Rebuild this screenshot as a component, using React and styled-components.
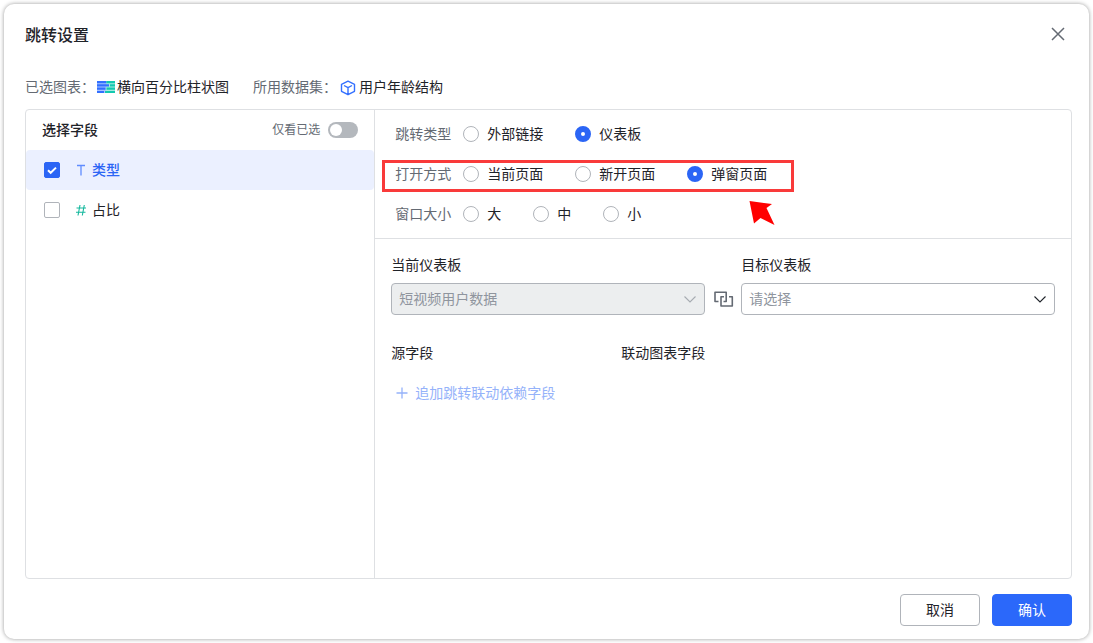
import React, { useState } from 'react';
import styled, { createGlobalStyle } from 'styled-components';

const GlobalStyle = createGlobalStyle`
    * {
        box-sizing: border-box;
    }
    body {
        margin: 0;
        background: #fff;
        color: #1f2329;
        font-family: "Liberation Sans", "Noto Sans CJK SC", sans-serif;
        font-size: 14px;
        line-height: 22px;
    }
    button, select, input {
        font: inherit;
        margin: 0;
    }
`;

const Page = styled.div`
    display: flex;
    min-height: 100vh;
    padding: 4px;
`;

const Dialog = styled.section`
    flex: 1;
    display: flex;
    flex-direction: column;
    padding: 19px 17px 13px 21px;
    border-radius: 10px;
    background: #fff;
    box-shadow: 0 0 4px rgba(0, 0, 0, 0.4);
`;

const Header = styled.header`
    display: flex;
    align-items: flex-start;
    justify-content: space-between;
    height: 26px;
    padding-right: 4px;
    h1 {
        margin: 0;
        font-size: 16px;
        font-weight: 500;
        line-height: 26px;
    }
`;

const CloseButton = styled.button`
    display: flex;
    padding: 2px 0;
    border: 0;
    background: none;
    color: #646a73;
    cursor: pointer;
`;

const Summary = styled.div`
    display: flex;
    gap: 24px;
    margin: 27px 0 11px;
`;

const SummaryItem = styled.div`
    display: flex;
    align-items: center;
    span {
        color: #646a73;
        white-space: nowrap;
    }
    svg {
        flex: none;
        margin: 0 2px;
    }
`;

const Panel = styled.div`
    flex: 1;
    display: grid;
    grid-template-columns: 1fr 2fr;
    border: 1px solid #dee0e3;
    border-radius: 4px;
`;

const SettingPane = styled.div`
    border-left: 1px solid #dee0e3;
`;

const FieldHeader = styled.div`
    display: flex;
    align-items: center;
    justify-content: space-between;
    height: 40px;
    padding: 0 16px;
    h2 {
        margin: 0;
        font-size: 14px;
        font-weight: 500;
    }
`;

const SwitchLabel = styled.label`
    display: flex;
    align-items: center;
    gap: 8px;
    color: #646a73;
    font-size: 12px;
`;

const Switch = styled.input`
    appearance: none;
    display: flex;
    align-items: center;
    width: 30px;
    height: 16px;
    padding: 0 2px;
    border-radius: 8px;
    background: #b4b8bd;
    &::before {
        content: "";
        width: 12px;
        height: 12px;
        border-radius: 50%;
        background: #fff;
    }
    &:checked {
        justify-content: flex-end;
        background: #3370ff;
    }
`;

const FieldRow = styled.label`
    display: flex;
    align-items: center;
    height: 40px;
    padding: 0 18px;
    border-radius: 4px;
    background: ${props => props.$active ? '#ebf0ff' : 'transparent'};
    color: ${props => props.$active ? '#2b65f5' : '#1f2329'};
    font-weight: ${props => props.$active ? 500 : 400};
    svg {
        margin: 0 4px 0 14px;
    }
`;

const CheckBox = styled.input`
    appearance: none;
    width: 16px;
    height: 16px;
    border: 1px solid #b0b4ba;
    border-radius: 2px;
    background: #fff;
    &:checked {
        border-color: #2b65f5;
        background: #2b65f5 url("data:image/svg+xml,%3Csvg xmlns='http://www.w3.org/2000/svg' viewBox='0 0 14 14'%3E%3Cpath d='M3 7.2l2.7 2.6L11 4.6' fill='none' stroke='white' stroke-width='2'/%3E%3C/svg%3E") center / 14px no-repeat;
    }
`;

const Options = styled.div`
    display: flex;
    flex-direction: column;
    align-items: flex-start;
    gap: 18px;
    padding: 13px 20px;
    height: 129px;
    border-bottom: 1px solid #dee0e3;
`;

const OptionRow = styled.fieldset`
    position: relative;
    display: flex;
    gap: 32px;
    min-width: 0;
    margin: 0;
    padding: 0;
    border: 0;
    legend {
        float: left;
        width: 56px;
        margin-right: -20px;
        padding: 0;
        color: #646a73;
    }
`;

// 强调框
const Highlight = styled.span`
    position: absolute;
    inset: -3px -27px -7px -13px;
    border: 3px solid #f93a3a;
    pointer-events: none;
`;

const Pointer = styled.svg`
    position: absolute;
    top: 37px;
    right: -9px;
    pointer-events: none;
`;

const RadioLabel = styled.label`
    display: flex;
    align-items: center;
    gap: 8px;
    white-space: nowrap;
`;

const Radio = styled.input`
    appearance: none;
    width: 16px;
    height: 16px;
    border: 1px solid #b0b4ba;
    border-radius: 50%;
    background: #fff;
    &:checked {
        border: 6px solid #2b65f5;
    }
`;

const Target = styled.div`
    padding: 15px 16px;
`;

const BoardRow = styled.div`
    display: flex;
    align-items: flex-end;
`;

const LinkIcon = styled.svg`
    flex: none;
    width: 36px;
    height: 32px;
`;

const BoardField = styled.label`
    flex: 1;
    display: flex;
    flex-direction: column;
    gap: 7px;
`;

const SelectWrap = styled.span`
    display: grid;
    align-items: center;
    & > * {
        grid-area: 1 / 1;
    }
    svg {
        justify-self: end;
        margin-right: 8px;
        color: ${props => props.$disabled ? '#a6abb1' : '#1f2329'};
        pointer-events: none;
    }
`;

const Select = styled.select`
    appearance: none;
    width: 100%;
    height: 32px;
    padding: 0 30px 0 7px;
    border: 1px solid #b0b4ba;
    border-radius: 4px;
    background: #fff;
    color: #8f959e;
    opacity: 1;
    &:disabled {
        background: #eceeef;
    }
`;

const FieldTitles = styled.div`
    display: grid;
    grid-template-columns: 230px 1fr;
    margin-top: 27px;
`;

const AddButton = styled.button`
    display: flex;
    align-items: center;
    gap: 6px;
    margin-top: 18px;
    padding: 0 4px;
    border: 0;
    background: none;
    color: #95b2fa;
`;

const Footer = styled.footer`
    display: flex;
    justify-content: flex-end;
    gap: 12px;
    margin-top: 15px;
`;

const Button = styled.button`
    width: 80px;
    height: 32px;
    padding: 0;
    border: 1px solid ${props => props.$primary ? '#2b68fa' : '#b0b4ba'};
    border-radius: 4px;
    background: ${props => props.$primary ? '#2b68fa' : '#fff'};
    color: ${props => props.$primary ? '#fff' : '#1f2329'};
    cursor: pointer;
`;

const optionRows = [
    { name: 'linkType', title: '跳转类型', items: ['外部链接', '仪表板'] },
    { name: 'openMode', title: '打开方式', items: ['当前页面', '新开页面', '弹窗页面'], marked: true },
    { name: 'windowSize', title: '窗口大小', items: ['大', '中', '小'] },
];

const ChartIcon = () => (
    <svg width="18" height="14" viewBox="0 0 18 14">
        <path d="M0 1h9v12H0z" fill="#a9c3ff" />
        <path d="M9 1h9v12H9z" fill="#a5ebe0" />
        <path d="M0 1h9.500v2.200H0zM0 4.300h12v2.200H0zM0 7.600h8.500v2.200H0zM0 10.900h7v2.200H0z" fill="#3370ff" />
        <path d="M9.500 1H18v2.200H9.500zM13 4.300h5v2.200h-5zM9.500 7.600H18v2.200H9.500zM8 10.900h10v2.200H8z" fill="#14c9b0" />
    </svg>
);

const CubeIcon = () => (
    <svg width="18" height="18" viewBox="-1 -2 18 18" fill="none" stroke="#3370ff" strokeWidth="1.4" strokeLinejoin="round">
        <path d="M8 1.200l6.500 3.200v6.900L8 14.700l-6.500-3.400V4.400zM4 5.500l4 2.100 4-2.100M8 7.600v7" />
    </svg>
);

const TextIcon = () => (
    <svg width="14" height="14" viewBox="0 0 14 14" fill="none" stroke="#5f8cff" strokeWidth="1.3">
        <path d="M3 2.500h8M7 2.500v10" />
    </svg>
);

const NumberIcon = () => (
    <svg width="14" height="14" viewBox="0 0 14 14" fill="none" stroke="#14b89d" strokeWidth="1.1">
        <path d="M2.500 5h9.500M2 9.300h9.500M6 2L4 12.500M10.300 2l-2 10.500" />
    </svg>
);

const Chevron = () => (
    <svg width="14" height="14" viewBox="0 0 14 14" fill="none" stroke="currentColor" strokeWidth="1.1">
        <path d="M1.500 4.500L7 10l5.500-5.500" />
    </svg>
);

const App = () => {

    const [fields, setFields] = useState({ type: true, ratio: false });
    const [values, setValues] = useState({ linkType: '仪表板', openMode: '弹窗页面', windowSize: '' });

    const toggleField = (key) => setFields({ ...fields, [key]: !fields[key] });

    return (
        <Page>
            <GlobalStyle />
            <Dialog role="dialog" aria-labelledby="dialog-title">
                <Header>
                    <h1 id="dialog-title">跳转设置</h1>
                    <CloseButton aria-label="关闭">
                        <svg width="20" height="20" viewBox="0 0 20 20" fill="none" stroke="currentColor" strokeWidth="1.5">
                            <path d="M4 3l12 12M16 3L4 15" />
                        </svg>
                    </CloseButton>
                </Header>

                <Summary>
                    <SummaryItem><span>已选图表：</span><ChartIcon />横向百分比柱状图</SummaryItem>
                    <SummaryItem><span>所用数据集：</span><CubeIcon />用户年龄结构</SummaryItem>
                </Summary>

                <Panel>
                    <div>
                        <FieldHeader>
                            <h2>选择字段</h2>
                            <SwitchLabel>仅看已选<Switch type="checkbox" role="switch" /></SwitchLabel>
                        </FieldHeader>
                        <FieldRow $active>
                            <CheckBox type="checkbox" checked={fields.type} onChange={() => toggleField('type')} />
                            <TextIcon />类型
                        </FieldRow>
                        <FieldRow>
                            <CheckBox type="checkbox" checked={fields.ratio} onChange={() => toggleField('ratio')} />
                            <NumberIcon />占比
                        </FieldRow>
                    </div>

                    <SettingPane>
                        <Options>
                            {optionRows.map(row => (
                                <OptionRow key={row.name}>
                                    <legend>{row.title}</legend>
                                    {row.items.map(item => (
                                        <RadioLabel key={item}>
                                            <Radio
                                                type="radio"
                                                name={row.name}
                                                checked={values[row.name] === item}
                                                onChange={() => setValues({ ...values, [row.name]: item })}
                                            />
                                            {item}
                                        </RadioLabel>
                                    ))}
                                    {row.marked && <Highlight />}
                                    {row.marked && (
                                        <Pointer width="28" height="28" viewBox="0 0 28 28" fill="#f00">
                                            <path d="M1.500 1l22.500 3-5.500 4 8 17-14-7-6.500 5.500z" />
                                        </Pointer>
                                    )}
                                </OptionRow>
                            ))}
                        </Options>

                        <Target>
                            <BoardRow>
                                <BoardField>
                                    当前仪表板
                                    <SelectWrap $disabled>
                                        <Select disabled><option>短视频用户数据</option></Select>
                                        <Chevron />
                                    </SelectWrap>
                                </BoardField>
                                <LinkIcon viewBox="0 0 36 32" fill="none" stroke="#646a73" strokeWidth="1.6" strokeLinejoin="round">
                                    <path d="M13.500 18.500H10V9.200h11.200v9.300h-2.700M19 13.700h-3v9.300h11.300v-9.300H24" />
                                </LinkIcon>
                                <BoardField>
                                    目标仪表板
                                    <SelectWrap>
                                        <Select><option>请选择</option></Select>
                                        <Chevron />
                                    </SelectWrap>
                                </BoardField>
                            </BoardRow>
                            <FieldTitles>
                                <div>源字段</div>
                                <div>联动图表字段</div>
                            </FieldTitles>
                            <AddButton>
                                <svg width="14" height="14" viewBox="0 0 14 14" fill="none" stroke="currentColor" strokeWidth="1.3">
                                    <path d="M1.500 7h11M7 1.500v11" />
                                </svg>
                                追加跳转联动依赖字段
                            </AddButton>
                        </Target>
                    </SettingPane>
                </Panel>

                <Footer>
                    <Button>取消</Button>
                    <Button $primary>确认</Button>
                </Footer>
            </Dialog>
        </Page>
    );

};

export default App;
